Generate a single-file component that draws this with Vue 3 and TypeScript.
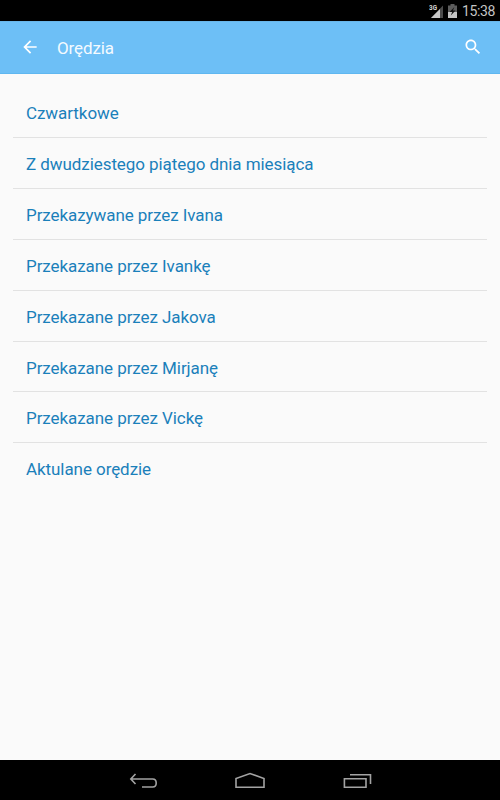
<script setup lang="ts">
const items: string[] = [
  'Czwartkowe',
  'Z dwudziestego piątego dnia miesiąca',
  'Przekazywane przez Ivana',
  'Przekazane przez Ivankę',
  'Przekazane przez Jakova',
  'Przekazane przez Mirjanę',
  'Przekazane przez Vickę',
  'Aktulane orędzie',
]
</script>

<template>
  <div class="screen">
    <div class="status">
      <svg class="signal" width="15" height="16" viewBox="0 0 15 16">
        <path d="M14 2.5V15H2Z" fill="#4b4b4b" />
        <path d="M11 6V15H2Z" fill="#c8c8c8" />
        <text x="0" y="7" font-size="7" font-weight="700" fill="#d6d6d6" stroke="#000" stroke-width="1" paint-order="stroke" textLength="8" lengthAdjust="spacingAndGlyphs">3G</text>
      </svg>
      <svg class="battery" width="9" height="14" viewBox="0 0 9 14">
        <path d="M0 1.5H2.5V0H6.5V1.5H9V14H0Z" fill="#5c5c5c" />
        <path d="M0 8H9V14H0Z" fill="#c4c4c4" />
        <path d="M6.4 3L1.6 8H4.2L2.8 11.6L7.5 6.5H4.9Z" fill="#111" />
      </svg>
      <span class="clock">15:38</span>
    </div>
    <header class="bar">
      <svg class="back" width="20" height="20" viewBox="0 0 24 24"><path fill="#fff" d="M20 11H7.83l5.59-5.59L12 4l-8 8 8 8 1.41-1.41L7.83 13H20v-2z" /></svg>
      <h1 class="title">Orędzia</h1>
      <svg class="search" width="20" height="20" viewBox="0 0 24 24"><path fill="#fff" d="M15.5 14h-.79l-.28-.27C15.41 12.59 16 11.11 16 9.5 16 5.91 13.09 3 9.5 3S3 5.91 3 9.5 5.91 16 9.5 16c1.61 0 3.09-.59 4.23-1.57l.27.28v.79l5 4.99L20.49 19l-4.99-5zm-6 0C7.01 14 5 11.99 5 9.5S7.01 5 9.5 5 14 7.01 14 9.5 11.99 14 9.5 14z" /></svg>
    </header>
    <ul class="list">
      <li v-for="item in items" :key="item" class="item">{{ item }}</li>
    </ul>
    <nav class="nav">
      <svg width="30" height="20" viewBox="0 0 30 20"><path d="M3 9H24.7C27.3 9 28.2 10.5 28.2 13S27.3 17 24.7 17H14M7.5 4L2.8 9L7.5 14" /></svg>
      <svg width="32" height="20" viewBox="0 0 32 20"><path d="M2 17.2V8.6L16 3.5L30 8.6V17.2Z" /></svg>
      <svg width="30" height="20" viewBox="0 0 30 20"><path d="M2.4 8.8H24V17.2H2.4ZM8 4.8H28.5V14" /></svg>
    </nav>
  </div>
</template>

<style>
body {
  margin: 0;
}
</style>

<style scoped>
.screen {
  width: 500px;
  height: 800px;
  display: flex;
  flex-direction: column;
  background: #fafafa;
  font-family: Roboto, 'Noto Sans', sans-serif;
  overflow: hidden;
}
.status {
  height: 21px;
  flex: none;
  background: #000;
  display: flex;
  align-items: center;
  justify-content: flex-end;
  padding-right: 5px;
  box-sizing: border-box;
}
.signal {
  margin-right: 4px;
}
.battery {
  margin-right: 5px;
}
.clock {
  width: 33px;
  font-size: 14px;
  letter-spacing: -0.4px;
  line-height: 22px;
  color: #c4c4c4;
  white-space: nowrap;
}
.bar {
  height: 53px;
  flex: none;
  box-sizing: border-box;
  padding: 0 17px 1px 20px;
  display: flex;
  align-items: center;
  background: #6dbff6;
  border-top: 1px solid #69b6e9;
  border-bottom: 1px solid #5fb7f0;
}
.title {
  flex: 1;
  margin: 0 0 0 17px;
  padding-top: 2px;
  color: #f4faff;
  font-size: 17px;
  font-weight: 400;
  line-height: 24px;
  letter-spacing: -0.1px;
}
.list {
  flex: 1;
  list-style: none;
  margin: 0;
  padding: 13.4px 13px 0;
}
.item {
  height: 50.83px;
  box-sizing: border-box;
  padding-left: 13px;
  line-height: 52px;
  font-size: 17px;
  font-weight: 400;
  letter-spacing: -0.07px;
  color: #1a80ba;
  border-bottom: 1px solid #e2e2e2;
}
.item:last-child {
  border-bottom: none;
}
.nav {
  height: 40px;
  flex: none;
  background: #000;
  display: flex;
  align-items: center;
  justify-content: space-between;
  padding: 0 128px;
}
.nav path {
  fill: none;
  stroke: #a3a3a3;
  stroke-width: 1.6;
}
</style>
